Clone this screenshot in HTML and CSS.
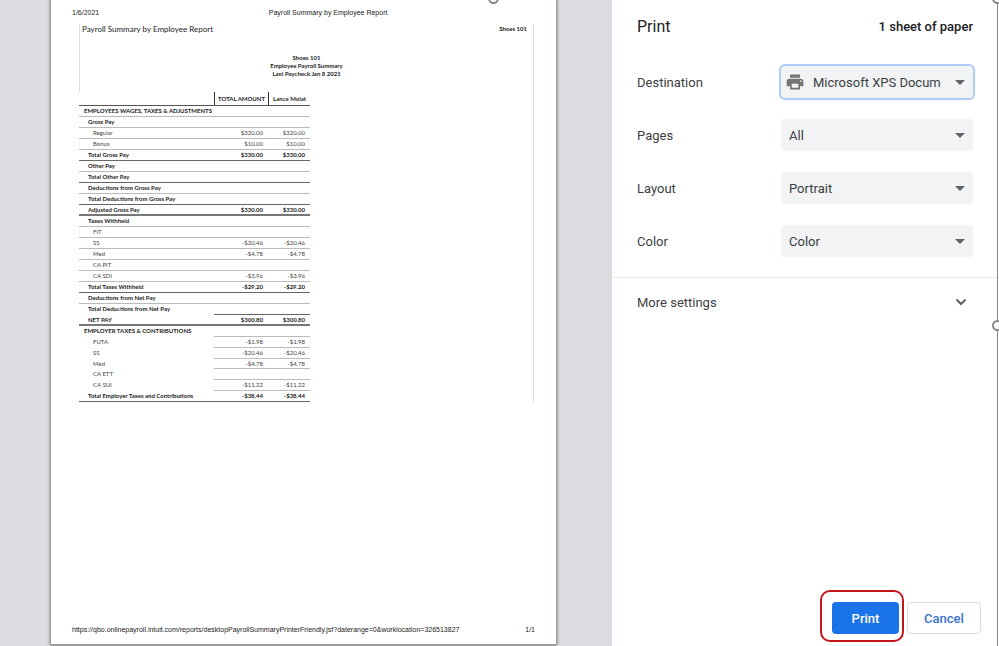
FILE: index.html
```html
<!DOCTYPE html>
<html lang="en">
<head>
    <meta charset="UTF-8">
    <meta name="viewport" content="width=device-width, initial-scale=1.0">
    <title>Print</title>
    <link rel="stylesheet" href="styles.css">
</head>
<body>
    <div class="dialog">
        <div class="preview">
            <div class="paper">
                <div class="paper-header">
                    <span>1/6/2021</span>
                    <span>Payroll Summary by Employee Report</span>
                    <span></span>
                </div>
                <div class="report">
                    <div class="report-top">
                        <div class="report-title">
                            <h1>Payroll Summary by Employee Report</h1>
                            <strong>Shoes 101</strong>
                        </div>
                        <div class="report-info">
                            <p>Shoes 101</p>
                            <p>Employee Payroll Summary</p>
                            <p>Last Paycheck Jan 8 2021</p>
                        </div>
                    </div>
                    <table>
                        <colgroup>
                            <col class="col-name">
                            <col class="col-total">
                            <col class="col-employee">
                        </colgroup>
                        <thead>
                            <tr><th></th><th>TOTAL AMOUNT</th><th>Lance Molat</th></tr>
                        </thead>
                        <tbody>
                            <tr class="section"><td>EMPLOYEES WAGES, TAXES &amp; ADJUSTMENTS</td><td></td><td></td></tr>
                            <tr class="group"><td>Gross Pay</td><td></td><td></td></tr>
                            <tr><td>Regular</td><td>$320.00</td><td>$320.00</td></tr>
                            <tr><td>Bonus</td><td>$10.00</td><td>$10.00</td></tr>
                            <tr class="group total"><td>Total Gross Pay</td><td>$330.00</td><td>$330.00</td></tr>
                            <tr class="group"><td>Other Pay</td><td></td><td></td></tr>
                            <tr class="group total"><td>Total Other Pay</td><td></td><td></td></tr>
                            <tr class="group"><td>Deductions from Gross Pay</td><td></td><td></td></tr>
                            <tr class="group total"><td>Total Deductions from Gross Pay</td><td></td><td></td></tr>
                            <tr class="group grand"><td>Adjusted Gross Pay</td><td>$330.00</td><td>$330.00</td></tr>
                            <tr class="group"><td>Taxes Withheld</td><td></td><td></td></tr>
                            <tr><td>FIT</td><td></td><td></td></tr>
                            <tr><td>SS</td><td>-$20.46</td><td>-$20.46</td></tr>
                            <tr><td>Med</td><td>-$4.78</td><td>-$4.78</td></tr>
                            <tr><td>CA PIT</td><td></td><td></td></tr>
                            <tr><td>CA SDI</td><td>-$3.96</td><td>-$3.96</td></tr>
                            <tr class="group total"><td>Total Taxes Withheld</td><td>-$29.20</td><td>-$29.20</td></tr>
                            <tr class="group"><td>Deductions from Net Pay</td><td></td><td></td></tr>
                            <tr class="group total amounts-only"><td>Total Deductions from Net Pay</td><td></td><td></td></tr>
                            <tr class="group grand"><td>NET PAY</td><td>$300.80</td><td>$300.80</td></tr>
                        </tbody>
                        <tbody class="employer">
                            <tr class="section"><td>EMPLOYER TAXES &amp; CONTRIBUTIONS</td><td></td><td></td></tr>
                            <tr><td>FUTA</td><td>-$1.98</td><td>-$1.98</td></tr>
                            <tr><td>SS</td><td>-$20.46</td><td>-$20.46</td></tr>
                            <tr class="no-line"><td>Med</td><td>-$4.78</td><td>-$4.78</td></tr>
                            <tr><td>CA ETT</td><td></td><td></td></tr>
                            <tr><td>CA SUI</td><td>-$11.22</td><td>-$11.22</td></tr>
                            <tr class="group total"><td>Total Employer Taxes and Contributions</td><td>-$38.44</td><td>-$38.44</td></tr>
                        </tbody>
                    </table>
                </div>
                <div class="paper-footer">
                    <span>https://qbo.onlinepayroll.intuit.com/reports/desktopPayrollSummaryPrinterFriendly.jsf?daterange=0&amp;worklocation=326513827</span>
                    <span>1/1</span>
                </div>
            </div>
        </div>

        <form class="settings">
            <div class="settings-header">
                <h2>Print</h2>
                <span>1 sheet of paper</span>
            </div>
            <div class="fields">
                <div class="field">
                    <label for="destination">Destination</label>
                    <div class="select destination">
                        <svg class="printer" viewBox="0 0 24 24"><path fill="#757575" d="M19 8H5c-1.66 0-3 1.34-3 3v6h4v4h12v-4h4v-6c0-1.66-1.34-3-3-3zm-3 11H8v-5h8v5zm3-7c-.55 0-1-.45-1-1s.45-1 1-1 1 .45 1 1-.45 1-1 1zm-1-9H6v4h12V3z"/></svg>
                        <select id="destination"><option>Microsoft XPS Docum</option></select>
                    </div>
                </div>
                <div class="field">
                    <label for="pages">Pages</label>
                    <div class="select"><select id="pages"><option>All</option></select></div>
                </div>
                <div class="field">
                    <label for="layout">Layout</label>
                    <div class="select"><select id="layout"><option>Portrait</option></select></div>
                </div>
                <div class="field">
                    <label for="color">Color</label>
                    <div class="select"><select id="color"><option>Color</option></select></div>
                </div>
            </div>
            <button type="button" class="more">
                More settings
                <svg viewBox="0 0 12 12"><path fill="none" stroke="#5f6368" stroke-width="2" d="M1.5 3.5L6 8l4.500-4.500"/></svg>
            </button>
            <div class="actions">
                <div class="print-wrap"><button type="submit" class="btn-print">Print</button></div>
                <button type="button" class="btn-cancel">Cancel</button>
            </div>
        </form>

        <!-- selection frame -->
        <div class="frame-line"></div>
        <span class="handle handle-top"></span>
        <span class="handle handle-corner"></span>
        <span class="handle handle-side"></span>
    </div>
</body>
</html>
```
FILE: styles.css
```css
* {
    box-sizing: border-box;
}
body {
    font-family: Roboto, sans-serif;
    font-size: 13px;
    margin: 0;
    color: #3c4043;
}
h1, h2, p {
    margin: 0;
}
.dialog {
    position: relative;
    display: flex;
    min-height: 100vh;
    background: #fff;
    overflow: hidden;
}

/* Preview */
.preview {
    flex: 1;
    display: flex;
    padding: 0 56px 1px 51px;
    background: #dadce0;
}
.paper {
    flex: 1;
    display: flex;
    flex-direction: column;
    padding: 8px 21px 9px;
    background: #fff;
    border-bottom: 1px solid #999;
    box-shadow: 0 0 3px 1px #777;
    font-family: "Liberation Sans", Arial, sans-serif;
    font-size: 7px;
    line-height: 10px;
    color: #222;
}
.paper-header {
    display: grid;
    grid-template-columns: 4fr auto 3fr;
    margin-bottom: 6px;
}
.paper-footer {
    display: flex;
    justify-content: space-between;
    margin-top: auto;
}
.report {
    margin: 0 1px 0 7px;
    border-right: 1px solid #ddd;
    font-family: Lato, sans-serif;
}
.report-top {
    height: 68px;
    border-left: 1px solid #ddd;
}
.report-title {
    display: flex;
    justify-content: space-between;
    padding: 0 6px 0 2px;
    margin-bottom: 20px;
    font-size: 6px;
}
.report-title h1 {
    font-size: 8px;
    font-weight: normal;
}
.report-info {
    text-align: center;
    font-size: 6px;
    font-weight: bold;
    line-height: 8px;
}

/* Payroll table */
table {
    width: 231px;
    table-layout: fixed;
    border-collapse: separate;
    border-spacing: 0;
    font-size: 6px;
    line-height: 8px;
}
.col-total {
    width: 54px;
}
.col-employee {
    width: 42px;
}
th {
    height: 14px;
    padding: 0;
    border-bottom: 1px solid #555;
}
th + th {
    border-left: 1px solid #333;
}
td {
    height: 11px;
    padding: 0 5px 0 0;
    border-bottom: 1px solid #bbb;
    text-align: right;
    white-space: nowrap;
    color: #444;
}
td:first-child {
    padding-left: 14px;
    text-align: left;
}
.group td, .section td {
    font-weight: bold;
    color: #222;
}
.group td:first-child {
    padding-left: 9px;
}
.section td:first-child {
    padding-left: 5px;
}
.total td {
    border-bottom-color: #666;
}
.grand td {
    border-bottom: 2px solid #777;
}
.employer tr:not(.total) td:first-child, .amounts-only td:first-child {
    border-bottom-color: transparent;
}
.employer .no-line td {
    height: 10px;
}

/* Settings */
.settings {
    width: 387px;
    display: flex;
    flex-direction: column;
    background: #fff;
}
.settings-header {
    display: flex;
    justify-content: space-between;
    align-items: center;
    padding: 15px 26px 0 25px;
    line-height: 24px;
    color: #202124;
}
.settings-header h2 {
    font-size: 16px;
    font-weight: normal;
}
.settings-header span {
    font-weight: 500;
}
.fields {
    display: flex;
    flex-direction: column;
    gap: 21px;
    padding: 27px 26px 20px 25px;
    border-bottom: 1px solid #e8eaed;
}
.field {
    display: flex;
    justify-content: space-between;
    align-items: center;
}
.select {
    position: relative;
    width: 192px;
}
.select::after {
    content: "";
    position: absolute;
    top: 14px;
    right: 8px;
    border: 5px solid transparent;
    border-top-color: #5f6368;
    border-bottom: 0;
    pointer-events: none;
}
.select select {
    appearance: none;
    display: block;
    width: 100%;
    height: 32px;
    padding: 0 26px 0 8px;
    border: 0;
    border-radius: 4px;
    background: #f1f3f4;
    font: inherit;
    color: #3c4043;
}
.destination select {
    padding-left: 32px;
    box-shadow: 0 0 0 2px #aecbfa;
}
.printer {
    position: absolute;
    top: 6px;
    left: 4px;
    width: 20px;
    height: 20px;
}
.more {
    display: flex;
    justify-content: space-between;
    align-items: center;
    height: 48px;
    padding: 0 32px 0 25px;
    border: 0;
    background: none;
    font: inherit;
    color: #3c4043;
}
.more svg {
    width: 12px;
    height: 12px;
}
.actions {
    display: flex;
    justify-content: flex-end;
    align-items: flex-end;
    gap: 3px;
    margin-top: auto;
    padding: 0 18px 4px 0;
}
.print-wrap {
    padding: 10px 3px 6px 10px;
    border: 2px solid #c5161d;
    border-radius: 10px;
}
.actions button {
    display: block;
    height: 32px;
    border-radius: 4px;
    font: inherit;
    font-weight: 500;
}
.btn-print {
    width: 67px;
    border: 0;
    background: #1a73e8;
    color: #fff;
}
.actions .btn-cancel {
    width: 74px;
    margin-bottom: 8px;
    border: 1px solid #dadce0;
    background: #fff;
    color: #3b73d1;
}

/* Selection frame */
.frame-line {
    position: absolute;
    top: 0;
    bottom: 0;
    right: 1px;
    width: 1px;
    background: #888;
}
.handle {
    position: absolute;
    width: 11px;
    height: 11px;
    border: 2px solid #888;
    border-radius: 50%;
    background: #fff;
}
.handle-top {
    top: -7px;
    left: 488px;
}
.handle-corner {
    top: -7px;
    right: -4px;
}
.handle-side {
    top: 50%;
    right: -4px;
    margin-top: -3px;
}
```
